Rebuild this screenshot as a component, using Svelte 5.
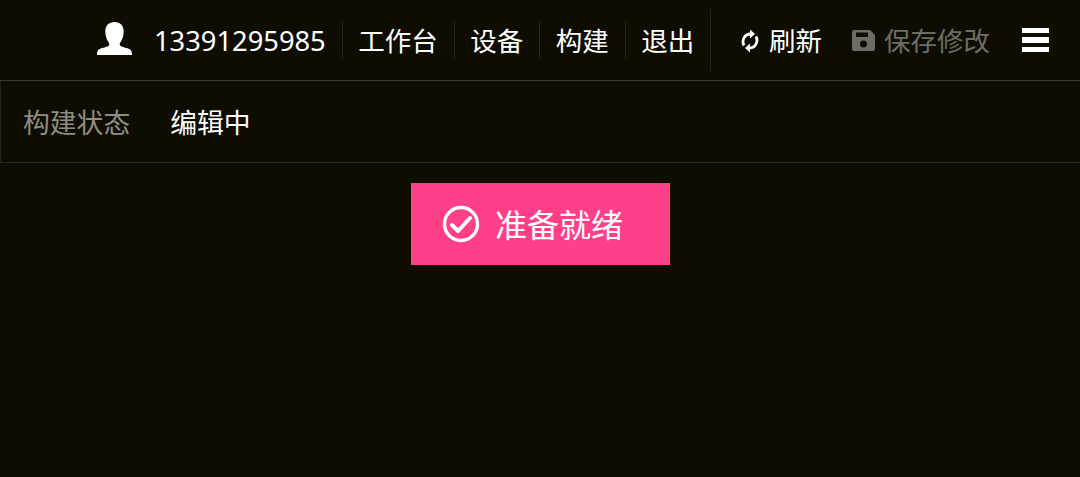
<script>
  const navLinks = ['工作台', '设备', '构建', '退出'];
</script>

<div class="page">
  <header class="topbar">
    <svg class="user-icon" viewBox="0 0 35 33" aria-hidden="true">
      <path d="M17.500 0c5.800 0 9.200 3.800 9.200 9.500 0 4.500-1.500 8.500-3.400 11-1 1.400-.8 3 .7 3.800 2.400 1.200 6 1.600 8.800 3 1.600.8 2.200 2.700 2.200 5.700H0c0-3 .6-4.900 2.200-5.700 2.800-1.400 6.400-1.800 8.800-3 1.500-.8 1.700-2.400.7-3.800-1.900-2.500-3.400-6.500-3.400-11C8.300 3.800 11.700 0 17.500 0z" fill="#fff"/>
    </svg>
    <span class="phone">13391295985</span>
    {#each navLinks as link}
      <span class="nav-link">{link}</span>
    {/each}
    <div class="actions">
      <span class="action refresh">
        <svg class="refresh-icon" viewBox="0 0 18 24" aria-hidden="true">
          <path d="M3 16.500C.3 11.500 3.500 5 9.500 5" fill="none" stroke="#fff" stroke-width="2.800"/>
          <path d="M9 .5L14 5 9 9.500z" fill="#fff"/>
          <path d="M15 7.500C17.700 12.500 14.500 19 8.500 19" fill="none" stroke="#fff" stroke-width="2.800"/>
          <path d="M9 23.500L4 19l5-4.500z" fill="#fff"/>
        </svg>
        刷新
      </span>
      <span class="action save">
        <svg class="save-icon" viewBox="0 0 23 21" aria-hidden="true">
          <path fill-rule="evenodd" d="M2 0h16l5 5v14a2 2 0 0 1-2 2H2a2 2 0 0 1-2-2V2a2 2 0 0 1 2-2zM4 2.500v4.500h12V2.500zM11.500 10.500a3.500 3.500 0 1 0 0 7 3.500 3.500 0 0 0 0-7z" fill="#6d6d66"/>
        </svg>
        保存修改
      </span>
      <div class="menu-icon" aria-hidden="true"><i></i><i></i><i></i></div>
    </div>
  </header>

  <div class="status-row">
    <span class="status-label">构建状态</span>
    <span class="status-value">编辑中</span>
  </div>

  <div class="content">
    <div class="ready">
      <svg class="check-icon" viewBox="0 0 38 38" aria-hidden="true">
        <circle cx="19" cy="19" r="16.500" fill="none" stroke="#fff" stroke-width="3.400"/>
        <path d="M10 20l6 6 12-13" fill="none" stroke="#fff" stroke-width="4" stroke-linecap="round" stroke-linejoin="round"/>
      </svg>
      <span class="ready-text">准备就绪</span>
    </div>
  </div>
</div>

<style>
  :global(body) {
    margin: 0;
    background: #0f0d02;
  }

  .page {
    height: 477px;
    overflow: hidden;
    background: #0f0d02;
    color: #fff;
    font-family: "Noto Sans", "Noto Sans CJK SC", sans-serif;
    font-size: 26.5px;
    line-height: 36px;
  }

  .topbar {
    display: flex;
    align-items: center;
    justify-content: flex-end;
    height: 81px;
    box-sizing: border-box;
    padding-right: 31px;
    border-bottom: 1px solid #3b3a2c;
  }

  .user-icon {
    width: 35px;
    height: 33px;
    margin-right: 22px;
    margin-top: -3px;
  }

  .phone,
  .nav-link {
    padding: 2px 15.750px 0;
    line-height: 34px;
    border-right: 1px solid #26251a;
  }

  .phone {
    padding-left: 0;
    font-size: 27.3px;
  }

  .nav-link:last-of-type {
    border-right: 0;
  }

  .actions {
    display: flex;
    align-items: center;
    align-self: stretch;
    margin: 9px 0;
    padding-left: 30px;
    padding-top: 1px;
    border-left: 1px solid #26251a;
  }

  .action {
    display: flex;
    align-items: center;
    white-space: nowrap;
  }

  .refresh-icon {
    width: 18px;
    height: 24px;
    margin-right: 10px;
  }

  .save {
    margin-left: 30px;
    color: #6d6d66;
  }

  .save-icon {
    width: 23px;
    height: 21px;
    margin-right: 9px;
    margin-top: -1px;
  }

  .menu-icon {
    display: flex;
    flex-direction: column;
    gap: 4px;
    width: 27px;
    margin-left: 32px;
    margin-top: -1px;
  }

  .menu-icon i {
    display: block;
    height: 5.300px;
    background: #fff;
  }

  .status-row {
    display: flex;
    align-items: center;
    height: 82px;
    box-sizing: border-box;
    padding-left: 22px;
    padding-top: 3px;
    font-size: 26.8px;
    border-left: 1px solid #26251a;
    border-bottom: 1px solid #2b2a1e;
  }

  .status-label {
    color: #8e8e84;
    margin-right: 40px;
  }

  .content {
    display: flex;
    justify-content: center;
    padding-top: 20px;
  }

  .ready {
    display: flex;
    align-items: center;
    width: 259px;
    height: 82px;
    margin-left: 1px;
    box-sizing: border-box;
    padding-left: 31px;
    background: #ff4088;
    font-size: 32px;
  }

  .ready-text {
    padding-top: 2px;
  }

  .check-icon {
    width: 38px;
    height: 38px;
    margin-right: 15px;
  }
</style>
